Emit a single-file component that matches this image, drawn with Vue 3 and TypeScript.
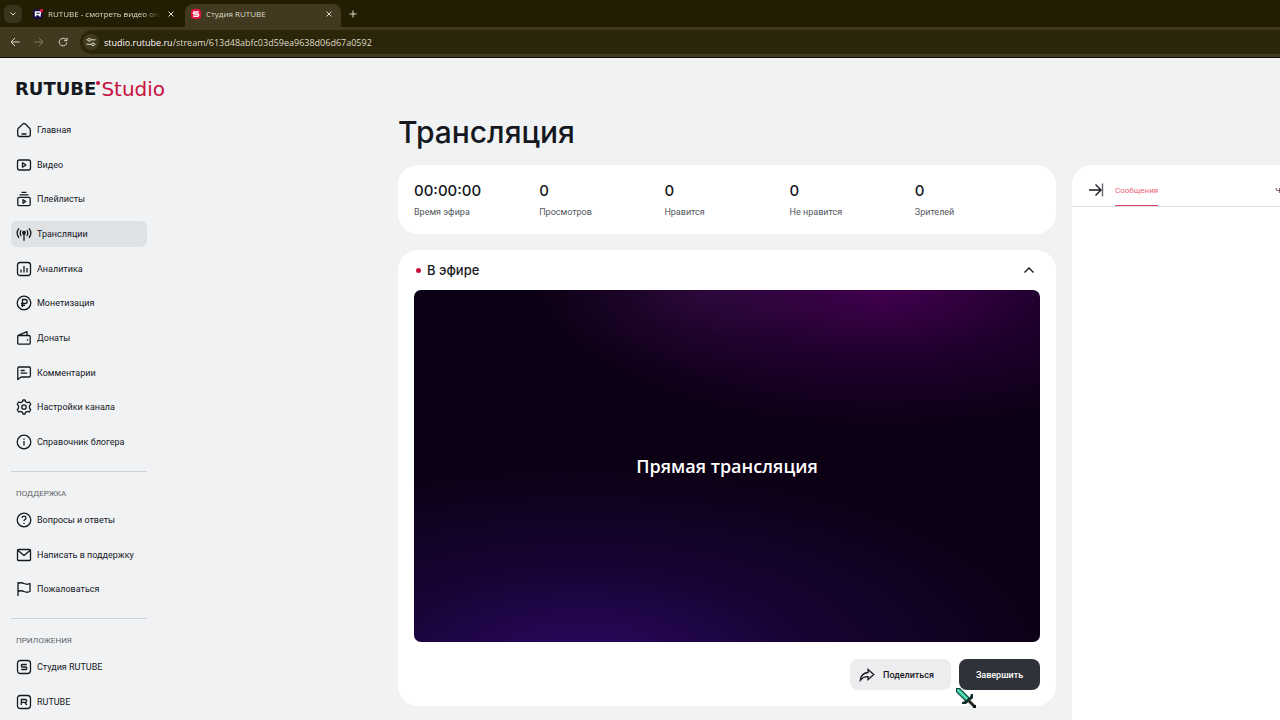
<script setup lang="ts">
import { ref } from 'vue'

interface NavItem { icon: string; label: string }

const mainNav: NavItem[] = [
  { icon: 'home', label: 'Главная' },
  { icon: 'video', label: 'Видео' },
  { icon: 'playlist', label: 'Плейлисты' },
  { icon: 'live', label: 'Трансляции' },
  { icon: 'chart', label: 'Аналитика' },
  { icon: 'ruble', label: 'Монетизация' },
  { icon: 'wallet', label: 'Донаты' },
  { icon: 'comment', label: 'Комментарии' },
  { icon: 'gear', label: 'Настройки канала' },
  { icon: 'info', label: 'Справочник блогера' },
]
const supportNav: NavItem[] = [
  { icon: 'help', label: 'Вопросы и ответы' },
  { icon: 'mail', label: 'Написать в поддержку' },
  { icon: 'flag', label: 'Пожаловаться' },
]
const appNav: NavItem[] = [
  { icon: 'studio', label: 'Студия RUTUBE' },
  { icon: 'rutube', label: 'RUTUBE' },
]
const groups = [
  { title: '', items: mainNav },
  { title: 'Поддержка', items: supportNav },
  { title: 'Приложения', items: appNav },
]

const icons: Record<string, string> = {
  home: 'M2.400 6.200 6.700 2.100q1.300-1.200 2.600 0l4.300 4.100q.7.700.7 1.600v4.700q0 2-2 2H3.700q-2 0-2-2V7.800q0-.900.700-1.600zM5.500 12h5',
  video: 'M3.500 3h9q2 0 2 2v6q0 2-2 2h-9q-2 0-2-2V5q0-2 2-2zM6.500 5.800v4.400L10 8z',
  playlist: 'M5.500 1.300h5M3.500 3.800h9M3.300 6.300h9.400q1.500 0 1.500 1.500v5.400q0 1.500-1.500 1.500H3.300q-1.500 0-1.500-1.500V7.800q0-1.500 1.500-1.500zM7 8.700v3.600l2.800-1.800z',
  live: 'M3 2.300q-3.700 4.700 0 9.500M5.200 4.100q-2 3 0 5.900M13 2.300q3.700 4.700 0 9.500M10.800 4.100q2 3 0 5.900M8 7.200v7.500',
  chart: 'M4 1.500h8q2.500 0 2.500 2.500v8q0 2.500-2.500 2.500H4Q1.500 14.500 1.500 12V4Q1.500 1.500 4 1.500zM5 8.500v3M8 5v6.500M11 7v4.500',
  ruble: 'M8 1.200a6.800 6.800 0 1 0 0 13.600a6.800 6.800 0 1 0 0-13.600zM6.500 12V4.500h2.700a2 2 0 0 1 0 4H5M5 10.300h4',
  wallet: 'M2.500 5.500h10.500q1.200 0 1.200 1.200v6.300q0 1.200-1.200 1.200H3.200q-1.500 0-1.500-1.500V6.500q0-1 1-1.400L11 1.700v3.600',
  comment: 'M3.200 2h10q1.200 0 1.200 1.200v7.600q0 1.200-1.200 1.200H5.200l-3.400 2.500V3.400Q1.800 2 3.200 2zM4.700 5.500h4M4.700 8.200h6.500',
  gear: 'M6.500 2.700 7 1h2l.5 1.700 2 1 1.900-.7 1.300 2.300-1.200 1.500v2.400l1.200 1.500-1.300 2.300-1.900-.7-2 1L9 15H7l-.5-1.700-2-1-1.900.7-1.300-2.300 1.200-1.500V6.800L1.300 5.300 2.600 3l1.900.7zM8 5.800a2.200 2.200 0 1 0 0 4.400a2.200 2.200 0 1 0 0-4.400z',
  info: 'M8 1.200a6.800 6.800 0 1 0 0 13.600a6.800 6.800 0 1 0 0-13.600zM8 7v4.500M8 4.500v1.200',
  help: 'M8 1.200a6.800 6.800 0 1 0 0 13.600a6.800 6.800 0 1 0 0-13.600zM6 6q.2-1.900 2-1.900T10 6q0 .9-1.100 1.500Q8 8 8 9M8 10.800v1.200',
  mail: 'M2.500 2.500h11q1 0 1 1v9q0 1-1 1h-11q-1 0-1-1v-9q0-1 1-1zM2 3.500l6 5 6-5',
  flag: 'M2 1v14M2 2.500q3-1.500 6 0t6 0v8q-3 1.500-6 0t-6 0',
  studio: 'M4.500 1.500h7q3 0 3 3v7q0 3-3 3h-7q-3 0-3-3v-7q0-3 3-3zM10.800 5.500H6.200q-.9 0-.9 1.200T6.200 8h3.600q1 0 1 1.200t-1 1.300H5.200',
  rutube: 'M4.500 1.500h7q3 0 3 3v7q0 3-3 3h-7q-3 0-3-3v-7q0-3 3-3zM5.300 11V5.500h4.200q1.200 0 1.200 1.400T9.500 8.300H5.300M8.800 8.300l2 2.700',
}

const activeItem = ref('live')
const open = ref(true)

const stats = [
  { value: '00:00:00', label: 'Время эфира' },
  { value: '0', label: 'Просмотров' },
  { value: '0', label: 'Нравится' },
  { value: '0', label: 'Не нравится' },
  { value: '0', label: 'Зрителей' },
]

const address = { host: 'studio.rutube.ru', path: '/stream/613d48abfc03d59ea9638d06d67a0592' }
</script>

<template>
  <div class="window">
    <header class="browser">
      <div class="tabs">
        <button class="tab-list" aria-label="Поиск вкладок"><svg viewBox="0 0 8 8"><path d="m1.500 2.500 2.500 2.500 2.500-2.500" /></svg></button>
        <div class="tab">
          <svg class="favicon" viewBox="0 0 10 10"><rect width="10" height="10" rx="3" fill="#160b42" /><circle cx="8.500" cy="1.500" r="2" fill="#d1123e" /><path d="M2.500 7.500V3h4q1 0 1 1.200T6.500 5.500h-4M6 5.500l1.500 2" class="mark" /></svg>
          <span class="tab-name fade">RUTUBE - смотреть видео онл</span>
          <button class="close" aria-label="Закрыть вкладку"><svg viewBox="0 0 8 8"><path d="m1.500 1.500 5 5m0-5-5 5" /></svg></button>
        </div>
        <div class="tab current">
          <svg class="favicon" viewBox="0 0 10 10"><rect width="10" height="10" rx="3" fill="#e0133f" /><path d="M7.800 3H3.200q-.8 0-.8 1t.8 1h3.600q.9 0 .9 1.100t-.9 1.200H2.200" class="mark" /></svg>
          <span class="tab-name">Студия RUTUBE</span>
          <button class="close" aria-label="Закрыть вкладку"><svg viewBox="0 0 8 8"><path d="m1.500 1.500 5 5m0-5-5 5" /></svg></button>
        </div>
        <button class="close plus" aria-label="Новая вкладка"><svg viewBox="0 0 8 8"><path d="M4 .5v7M.5 4h7" /></svg></button>
      </div>
      <div class="toolbar">
        <button class="tool" aria-label="Назад"><svg viewBox="0 0 10 10"><path d="M9.500 5H1m4-4L1 5l4 4" /></svg></button>
        <button class="tool dim" aria-label="Вперёд"><svg viewBox="0 0 10 10"><path d="M.5 5H9M5 1l4 4-4 4" /></svg></button>
        <button class="tool" aria-label="Обновить"><svg viewBox="0 0 10 10"><path d="M8.800 5.500A3.800 3.800 0 1 1 7.500 2.200L8.900 3.500M9 .8v2.900H6.100" /></svg></button>
        <div class="address">
          <span class="site"><svg viewBox="0 0 10 10"><path d="M.5 2.800h1.200M4.700 2.800H9.500M.5 7.300h5M8.500 7.300h1" /><circle cx="3.200" cy="2.800" r="1.400" /><circle cx="7" cy="7.300" r="1.400" /></svg></span>
          <span><b>{{ address.host }}</b>{{ address.path }}</span>
        </div>
      </div>
    </header>

    <div class="page">
      <aside class="sidebar">
        <a href="#" class="logo"><span class="brand">RUTUBE</span><i class="spark"></i><span class="sub">Studio</span></a>
        <nav v-for="g in groups" :key="g.title" class="group">
          <h2 v-if="g.title">{{ g.title }}</h2>
          <ul>
            <li v-for="n in g.items" :key="n.icon">
              <a href="#" :class="{ active: activeItem === n.icon }" @click.prevent="activeItem = n.icon">
                <svg viewBox="0 0 16 16" class="icon">
                  <path :d="icons[n.icon]" />
                  <circle v-if="n.icon === 'live'" cx="8" cy="6.800" r="2" class="solid" />
                  <circle v-if="n.icon === 'wallet'" cx="11.500" cy="10" r=".8" class="solid" />
                </svg>
                <span>{{ n.label }}</span>
              </a>
            </li>
          </ul>
        </nav>
      </aside>

      <main class="content">
        <h1>Трансляция</h1>
        <section class="card stats">
          <div v-for="s in stats" :key="s.label" class="stat">
            <strong>{{ s.value }}</strong>
            <span>{{ s.label }}</span>
          </div>
        </section>
        <section class="card stream">
          <div class="stream-head">
            <i class="dot"></i>
            <h3>В эфире</h3>
            <button class="toggle" :aria-expanded="open" aria-label="Свернуть" @click="open = !open"><svg viewBox="0 0 12 12"><path d="M1.500 8.500 6 4l4.500 4.500" /></svg></button>
          </div>
          <div v-if="open" class="player">Прямая трансляция</div>
          <div class="actions">
            <button class="btn share"><svg viewBox="0 0 16 16"><path d="M9 2.500 14.800 7.500 9 12.500V9.700Q4.500 9.400 1.300 13.300 2 6.300 9 5.500z" /></svg>Поделиться</button>
            <button class="btn finish">Завершить
              <svg class="sword" viewBox="0 0 22 22">
                <path d="M1 1h4l10 10-4 4L1 5z" fill="#123f38" />
                <path d="M2 2h2.500l9 9-2.500 2.500L2 4.500z" fill="#2fc79c" />
                <path d="m3 3 9 9" stroke="#8df5d2" stroke-width="1" />
                <path d="M16 7h2v4l-7 6H7v-2l3-1 5-4z" fill="#0d302c" />
                <path d="m14 14 6 6" stroke="#2a2320" stroke-width="3" />
                <path d="M18 18h3v3h-3z" fill="#0f1b1b" />
              </svg>
            </button>
          </div>
        </section>
      </main>

      <aside class="chat">
        <div class="chat-head">
          <button class="collapse" aria-label="Скрыть чат"><svg viewBox="0 0 16 16"><path d="M1 8h11.500M7.500 2.500 13 8l-5.500 5.500" /><path d="M14.500 1.500v13" class="bar" /></svg></button>
          <button class="chat-tab on">Сообщения</button>
          <button class="chat-tab right">Чат</button>
        </div>
      </aside>
    </div>
  </div>
</template>

<style>
body { background: #f0f2f4; overflow: hidden; }
</style>

<style scoped>
* { box-sizing: border-box; }
.window { height: 100vh; display: flex; flex-direction: column; overflow: hidden; font-family: Roboto, "Liberation Sans", sans-serif; font-size: 9px; color: #15181e; }
button { border: 0; padding: 0; margin: 0; background: none; font: inherit; color: inherit; cursor: pointer; }
a { color: inherit; text-decoration: none; }
h1, h2, h3, ul { margin: 0; padding: 0; font-weight: 400; list-style: none; }
svg { display: block; fill: none; stroke: currentColor; flex: none; }

.browser { flex: none; background: #413a20; color: #dedac9; border-bottom: 1px solid #0c0a02; font-family: "Open Sans", "Noto Sans", sans-serif; font-size: 9px; }
.tabs { height: 27px; display: flex; align-items: center; background: #221d03; }
.tab-list { width: 18px; height: 18px; margin-left: 4px; border-radius: 6px; background: #3a341c; display: grid; place-items: center; }
.tab-list svg, .close svg { width: 8px; height: 8px; }
.tab { width: 163px; height: 23px; margin-top: 4px; padding: 0 9px 4px 11px; display: flex; align-items: center; gap: 5px; border-radius: 8px 8px 0 0; }
.tab.current { background: #413a20; width: 156px; padding: 0 7px 4px 6px; }
.favicon { width: 10px; height: 10px; stroke: none; }
.mark { stroke: #fff; stroke-width: 1.4px; }
.tab-name { flex: 1; font-size: 8px; white-space: nowrap; overflow: hidden; }
.fade { mask-image: linear-gradient(90deg, #000 85%, transparent); }
.close { width: 10px; height: 10px; display: grid; place-items: center; }
.plus { margin-left: 7px; }
.toolbar { height: 30px; display: flex; align-items: center; padding-left: 10px; gap: 14px; }
.tool svg { width: 10px; height: 10px; }
.dim { opacity: .4; }
.address { flex: 1; height: 24px; margin-left: -2px; padding-left: 3px; border-radius: 12px 0 0 12px; background: #2b2509; display: flex; align-items: center; gap: 5px; }
.site { width: 16px; height: 16px; border-radius: 8px; background: #413a20; display: grid; place-items: center; }
.site svg { width: 10px; height: 10px; }
.address b { font-weight: 500; color: #fff; }

.page { flex: 1; min-height: 0; display: grid; grid-template-columns: 158px minmax(0, 1fr) 208px; background: #f0f2f4; }
.sidebar { padding: 20px 0 0 11px; }
.logo { width: max-content; height: 22px; margin: 0 0 17px 4px; display: flex; align-items: center; font-family: "DejaVu Sans", sans-serif; line-height: 22px; }
.brand { font-size: 18px; font-weight: 700; }
.spark { flex: none; width: 4px; height: 4px; border-radius: 2px; background: #c8103c; align-self: flex-start; margin: 3px 1px 0 0; }
.sub { font-size: 20px; color: #c8103c; }
.group ul { display: flex; flex-direction: column; justify-content: space-between; }
.group:nth-of-type(1) ul { min-height: 338px; }
.group:nth-of-type(2) ul { min-height: 95px; }
.group:nth-of-type(3) ul { gap: 9px; }
.group li a { width: 136px; height: 26px; padding-left: 5px; border-radius: 6px; display: flex; align-items: center; gap: 5px; white-space: nowrap; }
.group li a.active { background: #dfe2e5; }
.icon { width: 16px; height: 16px; stroke-width: 1.3px; stroke-linejoin: round; }
.solid { fill: currentColor; stroke: none; }
.group + .group { width: 136px; margin-top: 16px; border-top: 1px solid #ced1d5; padding-top: 16px; }
.group + .group h2 { margin-bottom: 7px; }
h2 { font-size: 8px; line-height: 12px; margin-left: 5px; text-transform: uppercase; color: #5d6268; }

.content { width: 658px; max-width: 100%; justify-self: end; margin-right: 16px; padding-top: 55px; }
h1 { font: 500 30px/38px Inter, sans-serif; margin-bottom: 14px; }
.card { background: #fff; border-radius: 20px; }
.stats { padding: 16px; display: grid; grid-template-columns: repeat(5, 1fr); height: 69px; }
.stat { display: flex; flex-direction: column; gap: 4px; }
.stat strong { font: 500 15px/20px Inter, sans-serif; }
.stat span { line-height: 14px; color: #51565e; }
.stream { margin-top: 16px; padding: 8px 16px 16px; }
.stream-head { height: 24px; margin-bottom: 8px; padding: 0 5px 0 2px; display: flex; align-items: center; gap: 6px; }
.dot { width: 5px; height: 5px; border-radius: 3px; background: #c5123f; }
h3 { font: 500 13px/20px Inter, sans-serif; flex: 1; }
.toggle svg { width: 12px; height: 12px; stroke-width: 1.4px; }
.player { aspect-ratio: 626 / 352; border-radius: 7px; display: grid; place-items: center; color: #fff; font: 600 18px/26px "Open Sans", sans-serif;
  background: radial-gradient(ellipse 56% 40% at 75% 0, #42004e, #29003ab0 45%, transparent), radial-gradient(ellipse 32% 24% at 52% 0, #3a1a46, #20102a66 55%, transparent), radial-gradient(ellipse 76% 56% at 27% 105%, #2a0860, #1d0644b0 45%, transparent), #0c0014; }
.actions { margin-top: 17px; display: flex; justify-content: flex-end; gap: 8px; }
.btn { height: 31px; border-radius: 8px; font-size: 9px; font-weight: 500; display: flex; align-items: center; justify-content: center; position: relative; }
.share { width: 101px; padding-right: 8px; gap: 8px; background: #ededf0; }
.share svg { width: 16px; height: 16px; stroke-width: 1.3px; }
.finish { width: 81px; background: #30323a; color: #fff; }
.sword { position: absolute; left: -4px; top: 28px; width: 22px; height: 22px; stroke: none; }

.chat { margin-top: 107px; background: #fff; border-radius: 20px 0 0 0; overflow: hidden; }
.chat-head { height: 42px; padding-left: 16px; display: flex; align-items: flex-end; border-bottom: 1px solid #dddfe2; }
.collapse { flex: none; width: 16px; height: 24px; margin-right: 11px; }
.collapse svg { width: 16px; height: 16px; stroke-width: 1.4px; margin-bottom: 8px; }
.chat-tab { flex: none; height: 22px; padding-bottom: 7px; line-height: 14px; font-size: 8px; border-bottom: 1px solid transparent; }
.bar { stroke: #666; }
.on { color: #ec5f76; border-color: #dc4560; }
.right { margin-left: 117px; }
</style>
